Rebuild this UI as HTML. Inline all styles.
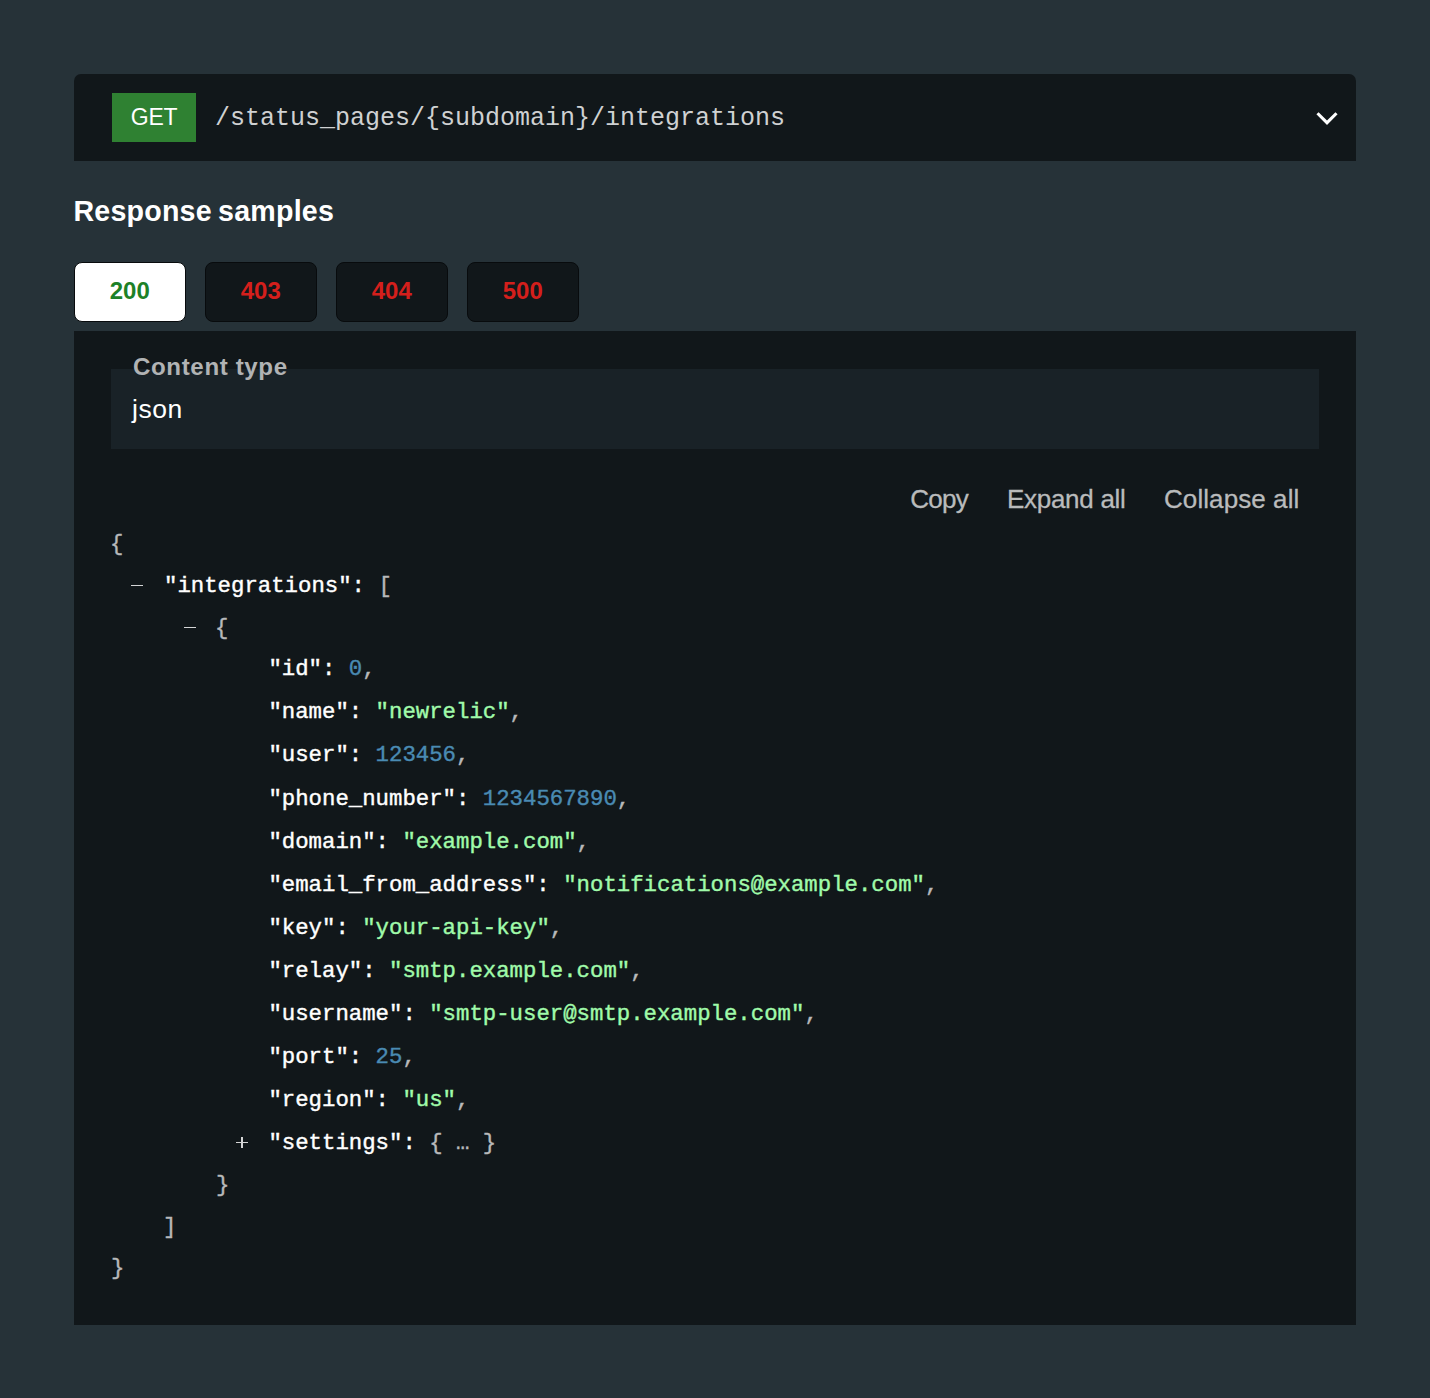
<!DOCTYPE html>
<html lang="en">
<head>
<meta charset="utf-8">
<title>Response samples</title>
<style>
  html, body { margin: 0; padding: 0; }
  body {
    width: 1430px; height: 1398px; overflow: hidden; position: relative;
    background: #263238;
    font-family: "Liberation Sans", sans-serif;
    color: #fff;
  }
  .abs { position: absolute; white-space: pre; }

  /* endpoint header */
  .hdr { left: 74px; top: 74px; width: 1281.6px; height: 87px; background: #11171a; border-radius: 7px 7px 0 0; }
  .badge { left: 112px; top: 93px; width: 84px; height: 49px; background: #2f8132; }
  .get { left: 112px; top: 93px; width: 84px; height: 49px; line-height: 49px; text-align: center; font-size: 23px; letter-spacing: -0.3px; color: #fff; }
  .path { left: 215px; top: 101.7px; line-height: 34px; font-family: "Liberation Mono", monospace; font-size: 25px; color: #cfd1d2; }

  /* heading */
  .h3 { left: 73.4px; top: 193.2px; line-height: 36px; font-size: 28.6px; font-weight: bold; letter-spacing: 0.23px; word-spacing: -2px; color: #fff; }

  /* tabs */
  .tab { top: 262px; width: 110px; height: 58px; border: 1px solid #080b0d; border-radius: 8px; background: #11171a;
         line-height: 55px; text-align: center; font-size: 24px; font-weight: bold; color: #d41f1c; }
  .tab.on { background: #fff; color: #1d8127; }

  /* panel */
  .panel { left: 74px; top: 331px; width: 1281.6px; height: 994px; background: #11171a; }
  .ctbox { left: 111px; top: 369px; width: 1207.6px; height: 79.8px; background: #192227; }
  .ctlabel { left: 132.8px; top: 352.1px; line-height: 30px; font-size: 23.3px; font-weight: bold; letter-spacing: 0.6px; transform: scaleX(1.0345); transform-origin: 0 50%; color: #b1b3b4; }
  .ctval { left: 132px; top: 392.6px; line-height: 32px; font-size: 26.5px; letter-spacing: 0.5px; color: #fff; }

  .btn { top: 482.6px; line-height: 32px; font-size: 26px; color: #b9bbbc; -webkit-text-stroke: 0.3px currentColor; }

  /* json */
  .ln { font-family: "Liberation Mono", monospace; font-size: 22.34px; line-height: 30px; color: #b8b9ba; -webkit-text-stroke: 0.4px currentColor; }
  .k { color: #fff; }
  .s { color: #a0fbaa; }
  .n { color: #4a8bb3; }
  .col { background: #d4d5d6; }
</style>
</head>
<body>

<div class="abs hdr"></div>
<div class="abs badge"></div>
<div class="abs get">GET</div>
<div class="abs path">/status_pages/{subdomain}/integrations</div>
<svg class="abs" style="left:1307.9px;top:98.7px" width="38" height="38" viewBox="0 0 24 24"><polygon fill="#fff" points="17.3 8.3 12 13.6 6.7 8.3 5.3 9.7 12 16.4 18.7 9.7"/></svg>

<div class="abs h3">Response samples</div>

<div class="abs tab on" style="left:73.8px">200</div>
<div class="abs tab" style="left:204.8px">403</div>
<div class="abs tab" style="left:335.8px">404</div>
<div class="abs tab" style="left:466.8px">500</div>

<div class="abs panel"></div>
<div class="abs ctbox"></div>
<div class="abs ctlabel">Content type</div>
<div class="abs ctval">json</div>

<div class="abs btn" style="left:910.2px;letter-spacing:-0.7px">Copy</div>
<div class="abs btn" style="left:1006.9px;letter-spacing:-0.27px">Expand all</div>
<div class="abs btn" style="left:1164px;letter-spacing:0.08px">Collapse all</div>

<!-- JSON lines: top = baseline - 21.4 -->
<div class="abs ln" style="left:110px;top:529px">{</div>
<div class="abs col" style="left:131px;top:585px;width:12.1px;height:1.3px"></div>
<div class="abs ln" style="left:164px;top:571px"><span class="k">"integrations":</span> [</div>
<div class="abs col" style="left:183.6px;top:627px;width:12.1px;height:1.3px"></div>
<div class="abs ln" style="left:215px;top:613px">{</div>

<div class="abs ln" style="left:268.4px;top:654px"><span class="k">"id":</span> <span class="n">0</span>,</div>
<div class="abs ln" style="left:268.4px;top:697px"><span class="k">"name":</span> <span class="s">"newrelic"</span>,</div>
<div class="abs ln" style="left:268.4px;top:740px"><span class="k">"user":</span> <span class="n">123456</span>,</div>
<div class="abs ln" style="left:268.4px;top:784px"><span class="k">"phone_number":</span> <span class="n">1234567890</span>,</div>
<div class="abs ln" style="left:268.4px;top:827px"><span class="k">"domain":</span> <span class="s">"example.com"</span>,</div>
<div class="abs ln" style="left:268.4px;top:870px"><span class="k">"email_from_address":</span> <span class="s">"notifications@example.com"</span>,</div>
<div class="abs ln" style="left:268.4px;top:913px"><span class="k">"key":</span> <span class="s">"your-api-key"</span>,</div>
<div class="abs ln" style="left:268.4px;top:956px"><span class="k">"relay":</span> <span class="s">"smtp.example.com"</span>,</div>
<div class="abs ln" style="left:268.4px;top:999px"><span class="k">"username":</span> <span class="s">"smtp-user@smtp.example.com"</span>,</div>
<div class="abs ln" style="left:268.4px;top:1042px"><span class="k">"port":</span> <span class="n">25</span>,</div>
<div class="abs ln" style="left:268.4px;top:1085px"><span class="k">"region":</span> <span class="s">"us"</span>,</div>
<div class="abs col" style="left:236.2px;top:1141.6px;width:11.5px;height:1.3px"></div>
<div class="abs col" style="left:241.3px;top:1136.5px;width:1.3px;height:11.5px"></div>
<div class="abs ln" style="left:268.4px;top:1128px"><span class="k">"settings":</span> { … }</div>

<div class="abs ln" style="left:216px;top:1170px">}</div>
<div class="abs ln" style="left:163px;top:1212px">]</div>
<div class="abs ln" style="left:111px;top:1253px">}</div>

</body>
</html>
